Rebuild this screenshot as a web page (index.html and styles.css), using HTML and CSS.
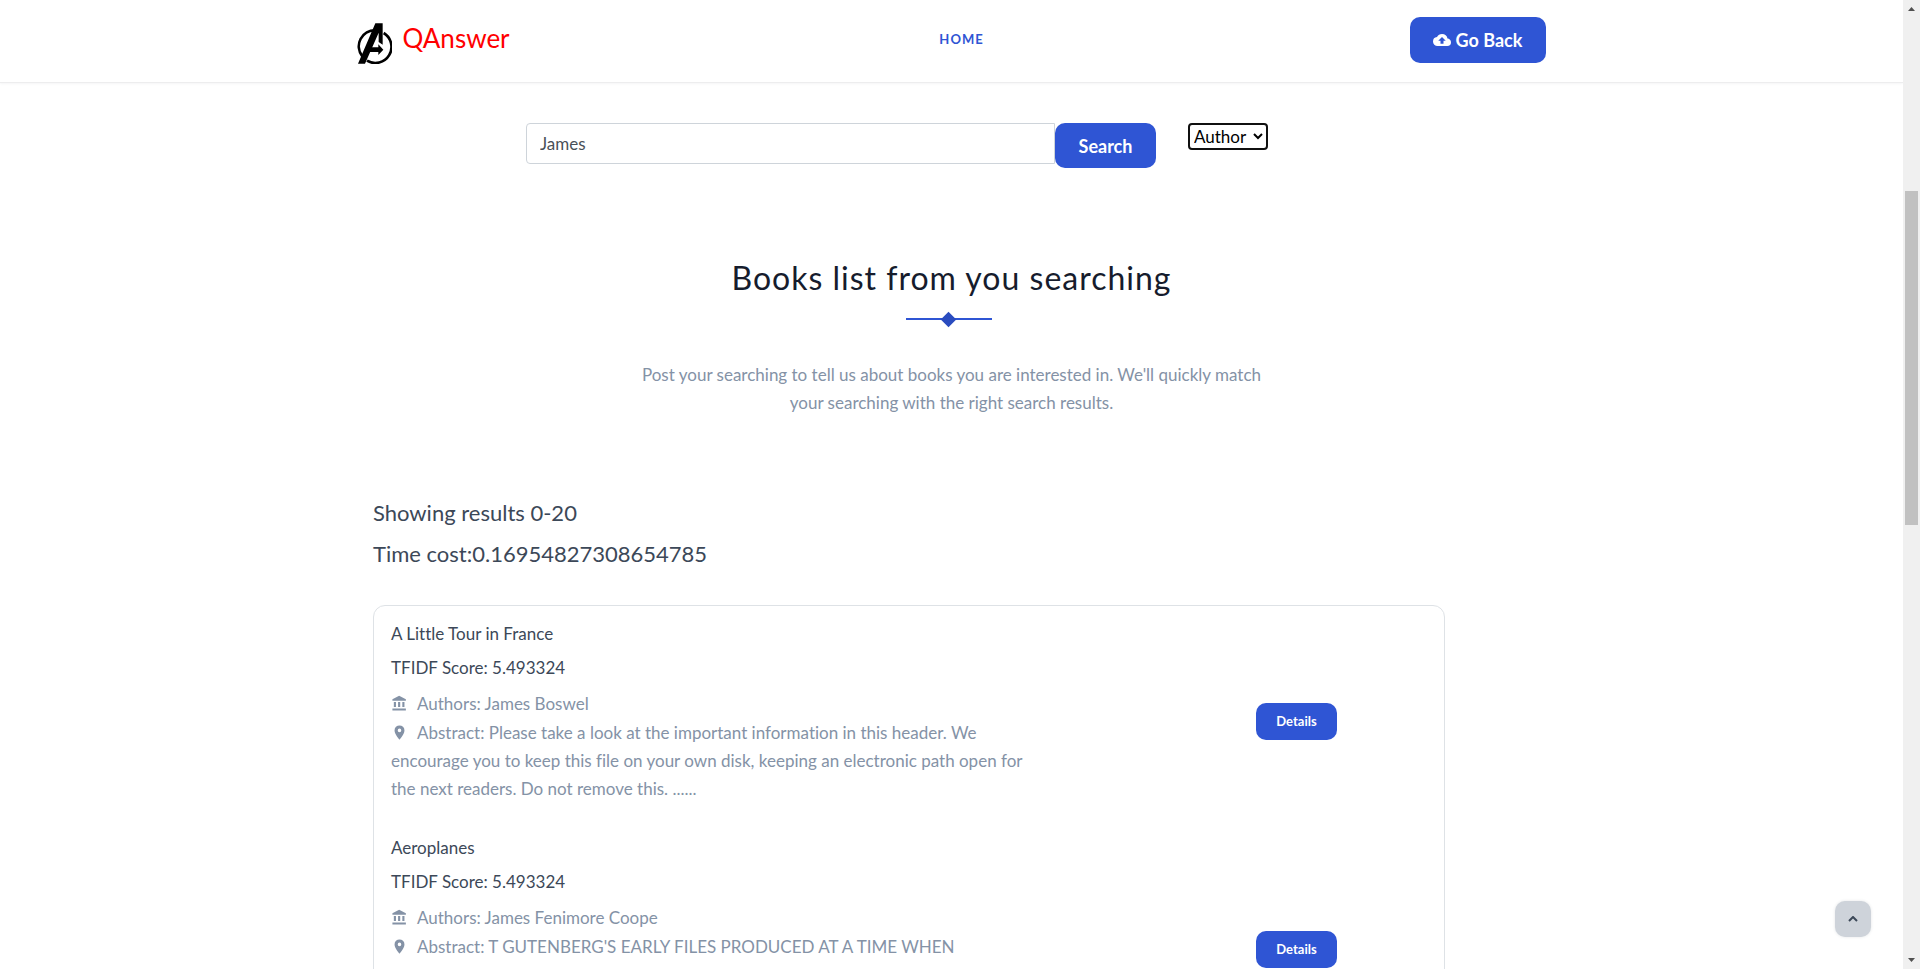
FILE: index.html
```html
<!DOCTYPE html>
<html lang="en">
<head>
<meta charset="utf-8">
<title>QAnswer</title>
<link rel="stylesheet" href="styles.css">
</head>
<body>
<svg class="sprite" aria-hidden="true">
  <symbol id="bank" viewBox="0 0 24 24"><path d="M11.5 1 2 6v2h19V6M16 10v7h3v-7M2 22h19v-3H2M10 10v7h3v-7M4 10v7h3v-7H4z"/></symbol>
  <symbol id="pin" viewBox="0 0 24 24"><path d="M12 11.5A2.5 2.5 0 0 1 9.500 9 2.500 2.500 0 0 1 12 6.500 2.500 2.500 0 0 1 14.500 9 2.500 2.500 0 0 1 12 11.500M12 2a7 7 0 0 0-7 7c0 5.250 7 13 7 13s7-7.750 7-13a7 7 0 0 0-7-7z"/></symbol>
</svg>
<div class="page">
  <header class="topbar">
    <div class="topbar-inner">
      <a class="brand" href="#">
        <svg class="brand-mark" viewBox="0 0 105 121" aria-hidden="true">
          <path d="M56 21A48 48 0 0 0 16 99M80 29A48 48 0 1 1 30 112" fill="none" stroke="#000" stroke-width="8"/>
          <path d="M55 0h22v64l-12-8V28L24 121H3z"/>
          <path d="M36 72h28v-9l15 16-15 16v-9H32z"/>
        </svg>
        <span>QAnswer</span>
      </a>
      <nav><a class="nav-link" href="#">HOME</a></nav>
      <button class="btn back" type="button">
        <svg class="cloud" viewBox="0 0 24 24" aria-hidden="true"><path d="M14 13v4h-4v-4H7l5-5 5 5m2.350-2.960A7.500 7.500 0 0 0 12 4C9.110 4 6.600 5.640 5.350 8.040A6 6 0 0 0 0 14a6 6 0 0 0 6 6h13a5 5 0 0 0 5-5c0-2.640-2.050-4.780-4.650-4.960z"/></svg>
        Go Back
      </button>
    </div>
  </header>
  <main>
    <form class="search">
      <input class="query" type="text" value="James" aria-label="Search text">
      <button class="btn submit" type="button">Search</button>
      <select class="field" aria-label="Search field"><option>Author</option><option>Title</option></select>
    </form>
    <section class="intro">
      <h1>Books list from you searching</h1>
      <div class="divider"><i></i></div>
      <p>Post your searching to tell us about books you are interested in. We'll quickly match<br>your searching with the right search results.</p>
    </section>
    <section class="results">
      <h2>Showing results 0-20</h2>
      <h2>Time cost:0.16954827308654785</h2>
      <div class="card">
        <article class="book">
          <div class="info">
            <h3>A Little Tour in France</h3>
            <h3>TFIDF Score: 5.493324</h3>
            <p class="authors"><svg class="icon" aria-hidden="true"><use href="#bank"/></svg>Authors: James Boswel</p>
            <p><svg class="icon" aria-hidden="true"><use href="#pin"/></svg>Abstract: Please take a look at the important information in this header. We<br>encourage you to keep this file on your own disk, keeping an electronic path open for<br>the next readers. Do not remove this. ......</p>
          </div>
          <button class="btn details" type="button">Details</button>
        </article>
        <article class="book">
          <div class="info">
            <h3>Aeroplanes</h3>
            <h3>TFIDF Score: 5.493324</h3>
            <p class="authors"><svg class="icon" aria-hidden="true"><use href="#bank"/></svg>Authors: James Fenimore Coope</p>
            <p><svg class="icon" aria-hidden="true"><use href="#pin"/></svg>Abstract: T GUTENBERG'S EARLY FILES PRODUCED AT A TIME WHEN<br><br><br><br></p>
          </div>
          <button class="btn details" type="button">Details</button>
        </article>
      </div>
    </section>
  </main>
</div>
<button class="to-top" type="button" aria-label="Back to top"><svg viewBox="0 0 10 6" aria-hidden="true"><path d="M1 5l4-4 4 4"/></svg></button>
<div class="scrollbar" aria-hidden="true">
  <svg viewBox="0 0 7 4"><path d="M0 4h7L3.500 0z"/></svg>
  <div class="track"><div class="thumb"></div></div>
  <svg viewBox="0 0 7 4"><path d="M0 0h7L3.500 4z"/></svg>
</div>
</body>
</html>
```
FILE: styles.css
```css
* { box-sizing: border-box; }
body {
  margin: 0;
  display: flex;
  height: 100vh;
  overflow: hidden;
  background: #fff;
  color: #8492a6;
  font: 17px/28px Lato, "Open Sans", sans-serif;
  font-variant-ligatures: none;
}
h1, h2, h3, p { margin: 0; font-weight: 400; }
button, input, select { font: inherit; }
.sprite { position: absolute; width: 0; height: 0; }
.page { flex: 1; min-width: 0; overflow: hidden; }
.topbar { height: 83px; border-bottom: 1px solid #ededee; box-shadow: 0 0 3px rgba(60, 72, 88, .1); }
.topbar-inner {
  display: grid;
  grid-template-columns: 1fr auto 1fr;
  max-width: 1190px;
  margin: 0 auto;
  padding-top: 17px;
}
.brand { display: flex; gap: 11px; color: #f00; font-size: 26px; line-height: 42px; text-decoration: none; }
.brand-mark { width: 35px; height: 41px; margin-top: 6px; }
.nav-link { margin-left: 20px; color: #2f55d4; font-size: 13px; line-height: 44px; font-weight: 700; letter-spacing: 1px; text-decoration: none; }
.btn { border: 0; border-radius: 10px; background: #2f55d4; color: #fff; font-size: 18px; font-weight: 700; cursor: pointer; }
.back { display: flex; align-items: center; justify-content: center; gap: 5px; justify-self: end; width: 136px; height: 46px; margin-right: 1px; padding: 0; }
.cloud { width: 18px; height: 18px; fill: #fff; }
.search { display: flex; align-items: flex-start; max-width: 851px; margin: 40px auto 0; }
.query { width: 529px; height: 41px; padding: 0 13px; border: 1px solid #ced4da; border-radius: 4px 0 0 4px; color: #495057; outline: 0; }
.submit { width: 101px; height: 45px; padding: 0; }
.field { width: 80px; height: 27px; margin-left: 32px; padding: 0; border: 2px solid #101010; border-radius: 4px; background: #fff; color: #000; }
.intro { margin-top: 86px; text-align: center; }
h1 { color: #161c2d; font-size: 32px; line-height: 48px; letter-spacing: 1px; }
.divider { display: flex; align-items: center; justify-content: center; width: 86px; height: 2px; margin: 16px 0 41px calc(50% - 46px); background: #2f55d4; }
.divider i { width: 11px; height: 11px; background: #2a4cbf; transform: rotate(45deg); }
.results { max-width: 1157px; margin: 81px auto 0; }
h2 { color: #3c4858; font-size: 22px; line-height: 30px; margin-bottom: 11px; }
.card { max-width: 1072px; margin-top: 36px; padding: 8px 17px; border: 1px solid #dee2e6; border-radius: 12px; }
.book { display: flex; align-items: center; padding: 0 90px 0 0; }
.info { flex: 1; padding: 6px 0 25px; }
h3 { color: #3c4858; font-size: 17px; line-height: 28px; margin-bottom: 6px; }
.authors { margin: 8px 0 1px; }
.icon { width: 17px; height: 17px; margin-right: 9px; vertical-align: -2px; fill: currentColor; }
.details { width: 81px; height: 37px; padding: 0; font-size: 13px; }
.to-top { position: fixed; right: 49px; bottom: 32px; display: grid; place-items: center; width: 36px; height: 36px; padding: 0; border: 0; border-radius: 10px; background: #ced3da; box-shadow: 0 0 3px rgba(60, 72, 88, .15); }
.to-top svg { width: 10px; height: 6px; fill: none; stroke: #3c4858; stroke-width: 2; }
.scrollbar { display: flex; flex-direction: column; align-items: center; justify-content: space-between; width: 17px; padding: 7px 0; background: #f0f0f0; }
.scrollbar svg { width: 7px; height: 4px; fill: #505050; }
.track { flex: 1; width: 13px; padding-top: 180px; }
.thumb { height: 334px; background: #c1c1c1; }
```
